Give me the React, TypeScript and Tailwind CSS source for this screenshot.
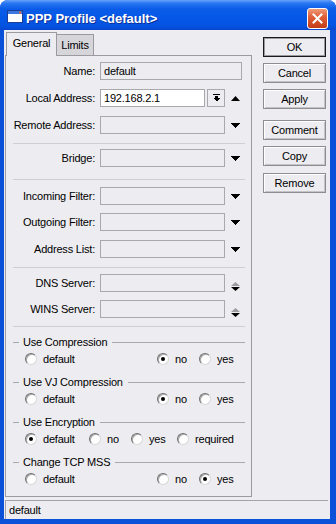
import React from "react";

const Down = () => (
  <svg width="9" height="5" viewBox="0 0 9 5" shapeRendering="crispEdges">
    <polygon points="0,0 9,0 4.5,5" fill="#000" />
  </svg>
);
const Up = ({ color = "#000" }: { color?: string }) => (
  <svg width="9" height="5" viewBox="0 0 9 5">
    <polygon points="0,5 9,5 4.5,0" fill={color} />
  </svg>
);
const SmallUp = ({ color }: { color: string }) => (
  <svg width="9" height="4" viewBox="0 0 9 4">
    <polygon points="0,4 9,4 4.5,0" fill={color} />
  </svg>
);
const SmallDown = ({ color }: { color: string }) => (
  <svg width="9" height="4" viewBox="0 0 9 4">
    <polygon points="0,0 9,0 4.5,4" fill={color} />
  </svg>
);

const Label = ({ children }: { children: React.ReactNode }) => (
  <div className="w-[82px] shrink-0 flex justify-end whitespace-nowrap mr-[5px]">{children}</div>
);

const Radio = ({ checked = false }: { checked?: boolean }) => (
  <span className="w-[12px] h-[12px] rounded-full bg-white border border-t-[#6f6f6f] border-l-[#6f6f6f] border-r-[#d8d8d8] border-b-[#d8d8d8] shadow-[inset_1px_1px_0_#a8a8a8] flex items-center justify-center shrink-0">
    {checked && <span className="w-[4px] h-[4px] rounded-full bg-black" />}
  </span>
);

const Opt = ({ label, checked, w }: { label: string; checked?: boolean; w: string }) => (
  <div className={"flex items-center " + w}>
    <Radio checked={checked} />
    <span className="ml-[6px]">{label}</span>
  </div>
);

const GroupHeader = ({ title, className }: { title: string; className: string }) => (
  <div className={"flex items-center h-[13px] " + className}>
    <div className="w-[6px] h-px bg-[#a9a9ad]" />
    <span className="ml-[4px] mr-[5px] whitespace-nowrap">{title}</span>
    <div className="flex-1 h-px bg-[#a9a9ad]" />
  </div>
);

const Box = ({ w }: { w: string }) => <div className={"h-[18px] border border-[#a9a9ad] " + w} />;

const Btn = ({ label, className, isDefault }: { label: string; className: string; isDefault?: boolean }) => (
  <div
    className={
      "w-[63px] h-[20px] flex items-center justify-center border " +
      (isDefault
        ? "border-[#1a1a1a] shadow-[inset_0_0_0_1px_#9a9a9e] "
        : "border-[#8e8e92] shadow-[inset_1px_1px_0_#ffffff,inset_-1px_-1px_0_#c4c4c8] ") +
      className
    }
  >
    {label}
  </div>
);

export default function App() {
  return (
    <div className="w-[336px] h-[524px] bg-white font-['Liberation_Sans',Arial,sans-serif] text-[11px] leading-[13px] text-black tracking-[-0.2px]">
      <div className="w-[336px] h-[524px] flex flex-col bg-[#0a50d8] rounded-t-[8px] overflow-hidden">
        {/* Title bar */}
        <div className="h-[30px] shrink-0 flex items-start bg-[linear-gradient(180deg,#6aa4fb_0%,#2b78f2_10%,#0a5ce8_30%,#0457e6_65%,#0452e0_88%,#0a47cc_100%)]">
          <div className="ml-[7px] mt-[10px]">
            <svg width="16" height="13" viewBox="0 0 16 13">
              <rect x="0.5" y="0.5" width="15" height="12" fill="#ffffff" stroke="#1b3f95" />
              <rect x="1" y="1" width="14" height="3" fill="#3b78e0" />
              <rect x="12" y="1.5" width="2" height="2" fill="#e8643a" />
            </svg>
          </div>
          <div className="ml-[3px] mt-[11px] text-white font-bold text-[13px] leading-[16px] tracking-[0px] [text-shadow:1px_1px_0_#0b2f9a] whitespace-nowrap">
            PPP Profile &lt;default&gt;
          </div>
          <div className="ml-auto mr-[8px] mt-[8px] w-[21px] h-[21px] rounded-[3px] border border-white bg-[linear-gradient(180deg,#f09a78_0%,#e0603a_40%,#cf4a24_75%,#c23c1a_100%)] flex items-center justify-center">
            <svg width="11" height="11" viewBox="0 0 11 11">
              <path d="M1.5 1.5 L9.5 9.5 M9.5 1.5 L1.5 9.5" stroke="#ffffff" strokeWidth="2" strokeLinecap="square" />
            </svg>
          </div>
        </div>

        {/* Frame body */}
        <div className="flex-1 flex pl-[4px] pr-[6px] pb-[5px]">
          <div className="flex-1 bg-[#edecf0] flex flex-col">
            <div className="flex">
              {/* Left column */}
              <div className="ml-[1px] w-[247px] pt-[2px] flex flex-col">
                <div className="h-[23px] flex items-end pl-[1px]">
                  <div className="relative z-10 mb-[-1px] h-[24px] w-[51px] bg-[#edecf0] border-l border-t border-r border-[#9a9aa0] flex items-center justify-center pb-[2px]">
                    General
                  </div>
                  <div className="h-[21px] w-[37px] bg-[#d6d5da] border-t border-r border-[#9a9aa0] flex items-center justify-center">
                    Limits
                  </div>
                </div>
                <div className="h-[442px] border border-[#9a9aa0] pt-[6px] pl-[7px] pr-[6px] flex flex-col">
                  <div className="flex items-center h-[18px]">
                    <Label>Name:</Label>
                    <div className="w-[142px] h-[18px] border border-[#a9a9ad] pl-[3px] flex items-center">default</div>
                  </div>
                  <div className="flex items-center h-[18px] mt-[9px]">
                    <Label>Local Address:</Label>
                    <div className="w-[106px] h-[18px] border border-[#a9a9ad] bg-white pl-[3px] flex items-center">192.168.2.1</div>
                    <div className="ml-[2px] w-[18px] h-[18px] border border-[#a9a9ad] flex items-center justify-center">
                      <svg width="7" height="8" viewBox="0 0 7 8" shapeRendering="crispEdges">
                        <rect x="0" y="0" width="7" height="1" fill="#000" />
                        <rect x="2" y="2" width="3" height="2" fill="#000" />
                        <polygon points="0,4 7,4 3.5,7.5" fill="#000" />
                      </svg>
                    </div>
                    <div className="w-[20px] flex justify-center">
                      <Up />
                    </div>
                  </div>
                  <div className="flex items-center h-[18px] mt-[9px]">
                    <Label>Remote Address:</Label>
                    <Box w="w-[126px]" />
                    <div className="w-[20px] flex justify-center">
                      <Down />
                    </div>
                  </div>
                  <div className="h-px bg-[#cfced4] mt-[9px]" />
                  <div className="flex items-center h-[18px] mt-[5px]">
                    <Label>Bridge:</Label>
                    <Box w="w-[126px]" />
                    <div className="w-[20px] flex justify-center">
                      <Down />
                    </div>
                  </div>
                  <div className="h-px bg-[#cfced4] mt-[12px]" />
                  <div className="flex items-center h-[18px] mt-[7px]">
                    <Label>Incoming Filter:</Label>
                    <Box w="w-[126px]" />
                    <div className="w-[20px] flex justify-center">
                      <Down />
                    </div>
                  </div>
                  <div className="flex items-center h-[18px] mt-[8px]">
                    <Label>Outgoing Filter:</Label>
                    <Box w="w-[126px]" />
                    <div className="w-[20px] flex justify-center">
                      <Down />
                    </div>
                  </div>
                  <div className="flex items-center h-[18px] mt-[9px]">
                    <Label>Address List:</Label>
                    <Box w="w-[126px]" />
                    <div className="w-[20px] flex justify-center">
                      <Down />
                    </div>
                  </div>
                  <div className="h-px bg-[#cfced4] mt-[9px]" />
                  <div className="flex items-center h-[18px] mt-[6px]">
                    <Label>DNS Server:</Label>
                    <Box w="w-[126px]" />
                    <div className="w-[20px] self-start mt-[8px] flex flex-col items-center gap-[1px]">
                      <SmallUp color="#9c9ca0" />
                      <SmallDown color="#000" />
                    </div>
                  </div>
                  <div className="flex items-center h-[18px] mt-[8px]">
                    <Label>WINS Server:</Label>
                    <Box w="w-[126px]" />
                    <div className="w-[20px] self-start mt-[8px] flex flex-col items-center gap-[1px]">
                      <SmallUp color="#9c9ca0" />
                      <SmallDown color="#000" />
                    </div>
                  </div>
                  <div className="h-px bg-[#cfced4] mt-[8px]" />

                  <GroupHeader title="Use Compression" className="mt-[9px]" />
                  <div className="flex items-center h-[14px] mt-[3px] pl-[12px]">
                    <Opt label="default" w="w-[132px]" />
                    <Opt label="no" checked w="w-[42px]" />
                    <Opt label="yes" w="" />
                  </div>

                  <GroupHeader title="Use VJ Compression" className="mt-[10px]" />
                  <div className="flex items-center h-[14px] mt-[3px] pl-[12px]">
                    <Opt label="default" w="w-[132px]" />
                    <Opt label="no" checked w="w-[42px]" />
                    <Opt label="yes" w="" />
                  </div>

                  <GroupHeader title="Use Encryption" className="mt-[10px]" />
                  <div className="flex items-center h-[14px] mt-[3px] pl-[12px]">
                    <Opt label="default" checked w="w-[64px]" />
                    <Opt label="no" w="w-[42px]" />
                    <Opt label="yes" w="w-[46px]" />
                    <Opt label="required" w="" />
                  </div>

                  <GroupHeader title="Change TCP MSS" className="mt-[10px]" />
                  <div className="flex items-center h-[14px] mt-[3px] pl-[12px]">
                    <Opt label="default" w="w-[132px]" />
                    <Opt label="no" w="w-[42px]" />
                    <Opt label="yes" checked w="" />
                  </div>
                </div>
              </div>

              {/* Right column buttons */}
              <div className="ml-[11px] pt-[7px] flex flex-col">
                <Btn label="OK" isDefault className="" />
                <Btn label="Cancel" className="mt-[6px]" />
                <Btn label="Apply" className="mt-[6px]" />
                <Btn label="Comment" className="mt-[11px]" />
                <Btn label="Copy" className="mt-[6px]" />
                <Btn label="Remove" className="mt-[7px]" />
              </div>
            </div>

            {/* Status bar */}
            <div className="mt-[3px] ml-[1px] mr-[2px] h-[19px] border-t border-l border-[#a4a4a8] pl-[3px] flex items-center">
              default
            </div>
          </div>
        </div>
      </div>
    </div>
  );
}
